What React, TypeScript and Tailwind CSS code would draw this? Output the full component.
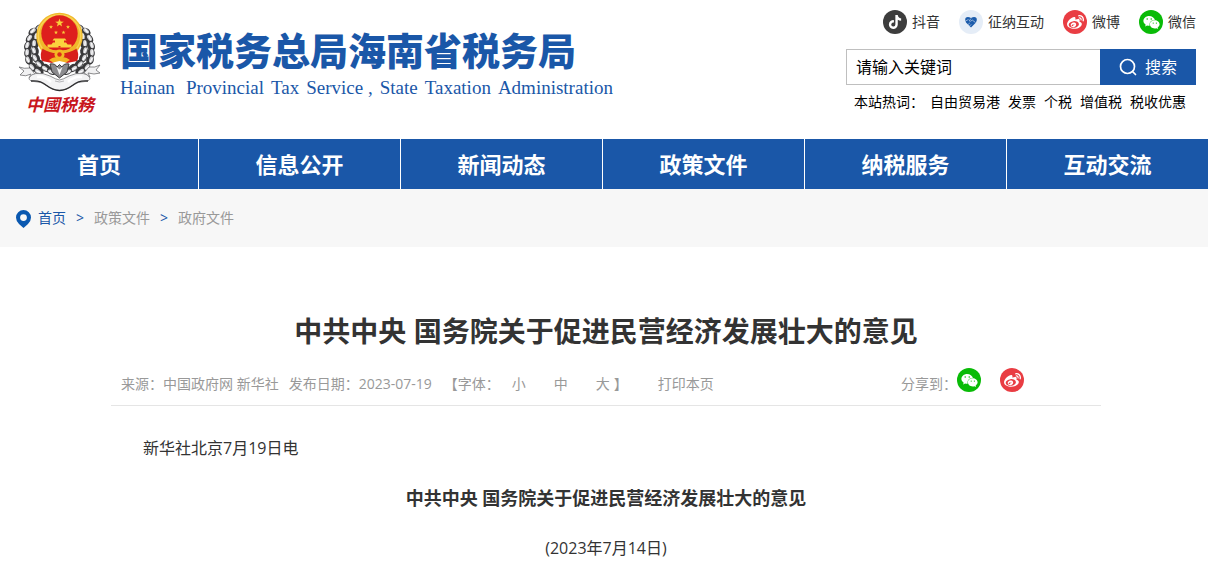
import { FaTiktok, FaWeibo, FaWeixin } from 'react-icons/fa6';

const socialLinks = [
  { label: '抖音', kind: 'douyin' },
  { label: '征纳互动', kind: 'heart' },
  { label: '微博', kind: 'weibo' },
  { label: '微信', kind: 'wechat' },
];

const hotWords = ['自由贸易港', '发票', '个税', '增值税', '税收优惠'];

const navItems = ['首页', '信息公开', '新闻动态', '政策文件', '纳税服务', '互动交流'];

const fontSizes = ['小', '中', '大'];

// Leaves of the wreath: x, y, rotation (left half, mirrored for the right)
const leaves = [
  [21, 17, 40],
  [15, 20, 50],
  [19, 25, 15],
  [12, 27, 35],
  [17, 32, 5],
  [10, 34, 20],
  [17, 39, -10],
  [10, 41, 5],
  [18, 46, -25],
  [11, 48, -15],
  [22, 52, -40],
  [15, 55, -35],
  [28, 56, -55],
  [21, 59, -55],
  [34, 59, -70],
];

function Wreath() {
  return (
    <g>
      {leaves.map(([x, y, r]) => (
        <g key={`${x}-${y}`} transform={`translate(${x} ${y}) rotate(${r})`}>
          <ellipse rx="3.8" ry="5" fill="#39393b" />
          <ellipse cx="-1" cy="-0.6" rx="1.9" ry="3.4" fill="#cfcfd2" />
          <path d="M-1.6 -2.600 L-0.6 1.800" stroke="#ffffff" strokeWidth="1.1" />
        </g>
      ))}
    </g>
  );
}

function Star({ x, y, s }: { x: number; y: number; s: number }) {
  return (
    <path
      transform={`translate(${x} ${y}) scale(${s})`}
      d="M0 -5 L1.2 -1.6 L4.8 -1.5 L1.9 0.6 L2.9 4 L0 2 L-2.9 4 L-1.9 0.6 L-4.8 -1.5 L-1.2 -1.6Z"
      fill="#f9cf3a"
    />
  );
}

function Emblem() {
  return (
    <svg viewBox="0 0 84 80" className="h-20 w-[84px]" aria-hidden="true">
      <Wreath />
      <g transform="translate(83 0) scale(-1 1)">
        <Wreath />
      </g>
      {/* Ribbon tails */}
      <path d="M1 55 Q6 57 12 56 L17 62 L11 66 L13 62 Q8 65 2 63 L6 59Z" fill="#f1f1f2" stroke="#707072" strokeWidth="0.8" />
      <path d="M82 53 Q77 56 71 55 L66 61 L72 65 L70 61 Q76 63 82 61 L78 58Z" fill="#f1f1f2" stroke="#707072" strokeWidth="0.8" />
      {/* National emblem */}
      <circle cx="41.500" cy="24" r="23.2" fill="#f0b92b" />
      <circle cx="41.500" cy="24" r="21.2" fill="none" stroke="#f8d353" strokeWidth="1.4" />
      <circle cx="41.500" cy="21.500" r="18.2" fill="#de1f1d" />
      <path d="M25 36 L33 40 H50 L58 36 Q62 42 59 49 L49 51 L41.500 47 L34 51 L24 49 Q21 42 25 36Z" fill="#d8201b" />
      <path d="M25 34 Q33 39 41.500 38 Q50 39 58 34 L58 37 Q50 42 41.500 41 Q33 42 25 37Z" fill="#f0b22a" />
      <circle cx="41.500" cy="42.500" r="5" fill="#f4b823" />
      <circle cx="41.500" cy="42.500" r="2.2" fill="#dc2a1c" />
      <path d="M31 48 Q37 43 41.500 47 Q46 43 52 48 L48 50.500 L41.500 49 L35 50.500Z" fill="#f2b526" />
      <path d="M36 26.500 H47 L48.500 28.500 H34.500Z M37 28.500 H46 V30.500 H37Z M35 30.500 H48 L50 33 H33Z M29.500 32.500 H53.500 V35.500 H29.500Z" fill="#fbd33e" />
      <path d="M40.500 34 H42.500 V35.500 H40.500Z" fill="#de1f1d" />
      <Star x={41.500} y={11} s={0.9} />
      <Star x={33} y={15} s={0.42} />
      <Star x={50} y={15} s={0.42} />
      <Star x={38} y={20.500} s={0.42} />
      <Star x={45.500} y={20.500} s={0.42} />
      {/* Centre knot and ribbon */}
      <path d="M32 52 Q37 51 39 55 L41.500 52.500 L44 55 Q46 51 51 52 L49 60 L41.500 66 L34 60Z" fill="#8b8b8e" stroke="#3e3e40" strokeWidth="1" />
      <path d="M38.500 55 L41.500 63 L44.500 55 L41.500 57.500Z" fill="#f4f4f5" />
      <path
        d="M11 66 Q13 62 18 61.500 Q25 60.500 32 64 Q38 67.500 41.500 68 Q45 67.500 51 64 Q58 60.500 65 61.500 Q70 62 72 66 Q72 69 67 69.500 Q60 69 54 74 Q48 78 41.500 78.500 Q35 78 29 74 Q23 69 16 69.500 Q11 69 11 66Z"
        fill="#f3f3f4"
        stroke="#77777a"
        strokeWidth="0.8"
      />
      <path d="M13 69 Q22 68 28 73 Q35 78.500 41.500 78.500 Q48 78.500 55 73 Q61 68 70 69" fill="none" stroke="#2f2f31" strokeWidth="1.3" />
      <path d="M19 65 Q27 64 33 70 M64 65 Q56 64 50 70" fill="none" stroke="#ffffff" strokeWidth="2.500" />
      <path d="M37 69 Q41.500 71 46 69" fill="none" stroke="#b5b5b8" strokeWidth="1" />
    </svg>
  );
}

function RoundIcon({ kind }: { kind: string }) {
  if (kind === 'douyin') {
    return (
      <span className="flex size-6 items-center justify-center rounded-full bg-[#3d3d3d] text-white">
        <FaTiktok size={14} />
      </span>
    );
  }
  if (kind === 'heart') {
    return (
      <span className="flex size-6 items-center justify-center rounded-full bg-[#e5edf7]">
        <svg viewBox="0 0 14 12" className="h-3 w-3.5" aria-hidden="true">
          <path d="M7 11.500 L2 6.500 Q0.500 4 1.500 2 Q3.600 0 7 2 Q10.400 0 12.500 2 Q13.500 4 12 6.500Z" fill="#1c5cab" />
          <path d="M1.500 5 L4.500 3.500 M7 2.500 L5.200 4.800 L6.800 5.200 L8.200 4 L11.500 6.500 M4 8.500 L5.800 7 M5.600 10 L7.200 8.400" fill="none" stroke="#e5edf7" strokeWidth="0.6" />
        </svg>
      </span>
    );
  }
  if (kind === 'weibo') {
    return (
      <span className="flex size-6 items-center justify-center rounded-full bg-[#e93d43] text-white">
        <FaWeibo size={17} />
      </span>
    );
  }
  return (
    <span className="flex size-6 items-center justify-center rounded-full bg-[#09bb07] text-white">
      <FaWeixin size={17} />
    </span>
  );
}

function Header() {
  return (
    <header className="flex justify-between pr-3 pl-[18px]">
      <a href="#" className="flex pt-3 text-[#1a57a8]">
        <div className="flex w-[84px] flex-col items-center">
          <Emblem />
          <span className="text-[17px] leading-[26px] font-bold whitespace-nowrap text-[#c8161d] italic">中國税務</span>
        </div>
        <div className="pt-3.5 pl-[18px]">
          <h1 className="text-[38px] leading-12 font-black whitespace-nowrap">国家税务总局海南省税务局</h1>
          <p className="mt-0.5 flex gap-[7px] font-['Liberation_Serif'] text-[19px] leading-6 whitespace-nowrap">
            <span className="mr-1">Hainan</span>
            <span>Provincial</span>
            <span>Tax</span>
            <span>Service ,</span>
            <span>State</span>
            <span>Taxation</span>
            <span>Administration</span>
          </p>
        </div>
      </a>

      <div className="flex w-[350px] flex-col pt-2.5">
        <ul className="flex justify-end gap-[19px] text-sm leading-6 text-[#333]">
          {socialLinks.map((item) => (
            <li key={item.label}>
              <a href="#" className="flex items-center gap-[5px]">
                <RoundIcon kind={item.kind} />
                {item.label}
              </a>
            </li>
          ))}
        </ul>

        <form className="mt-[15px] flex h-9" onSubmit={(e) => e.preventDefault()}>
          <input
            type="text"
            aria-label="请输入关键词"
            placeholder="请输入关键词"
            className="min-w-0 flex-1 border border-r-0 border-[#bfbfbf] px-[9px] text-base text-black outline-none placeholder:text-black"
          />
          <button type="submit" className="flex w-24 items-center justify-center gap-2 bg-[#1a57a8] text-base text-white">
            <svg viewBox="0 0 18 18" className="size-[18px]" fill="none" stroke="currentColor" strokeWidth="1.7" aria-hidden="true">
              <circle cx="8.500" cy="8.500" r="7" />
              <path d="M13.500 13.500 L16.500 16.500" strokeLinecap="round" />
            </svg>
            搜索
          </button>
        </form>

        <div className="mt-[5px] flex gap-2 pl-2 text-sm leading-6 text-black">
          <span className="-mr-0.5">本站热词：</span>
          {hotWords.map((word) => (
            <a key={word} href="#">
              {word}
            </a>
          ))}
        </div>
      </div>
    </header>
  );
}

function NavBar() {
  return (
    <nav className="mt-[21px] grid grid-cols-[199fr_202fr_202fr_202fr_202fr_201fr] bg-[#1a57a8]">
      {navItems.map((item) => (
        <a
          key={item}
          href="#"
          className="border-r border-white text-center text-[22px] leading-[50px] font-bold text-white last:border-r-0"
        >
          {item}
        </a>
      ))}
    </nav>
  );
}

function Breadcrumb() {
  return (
    <div className="flex h-[58px] items-center bg-[#f7f7f7] pl-4 text-sm text-[#999]">
      <svg viewBox="0 0 15 18" className="mt-0.5 mr-[7px] h-[18px] w-[15px]" aria-hidden="true">
        <path
          fillRule="evenodd"
          d="M7.500 0 A7.500 7.500 0 0 1 15 7.500 Q15 11 12 14 L7.500 18 L3 14 Q0 11 0 7.500 A7.500 7.500 0 0 1 7.500 0Z M7.500 4.200 A3.400 3.400 0 1 0 7.500 11 A3.400 3.400 0 1 0 7.500 4.200Z"
          fill="#0a58b0"
        />
      </svg>
      <a href="#" className="text-[#1a57a8]">首页</a>
      <span className="w-7 text-center text-[#1a57a8]">&gt;</span>
      <a href="#">政策文件</a>
      <span className="w-7 text-center text-[#1a57a8]">&gt;</span>
      <a href="#">政府文件</a>
    </div>
  );
}

function Article() {
  return (
    <article className="pt-[60px] pr-[107px] pl-[111px] text-[#333]">
      <h2 className="text-center text-[28px] leading-12 font-bold">中共中央 国务院关于促进民营经济发展壮大的意见</h2>

      <div className="mt-2 flex h-[43px] items-center border-b border-[#e5e5e5] px-2.5 text-sm text-[#999]">
        <span>来源：中国政府网 新华社</span>
        <span className="ml-2.5">发布日期：2023-07-19</span>
        <div className="ml-3 flex">
          <span>【字体：</span>
          <div className="flex gap-7 pl-3">
            {fontSizes.map((size) => (
              <button key={size} type="button">
                {size}
              </button>
            ))}
          </div>
          <span className="ml-1">】</span>
        </div>
        <button type="button" className="ml-[30px]">
          打印本页
        </button>
        <div className="mr-[67px] ml-auto flex items-center">
          <span>分享到：</span>
          <div className="mb-2 flex gap-[19px]">
            <a href="#" aria-label="微信">
              <RoundIcon kind="wechat" />
            </a>
            <a href="#" aria-label="微博">
              <RoundIcon kind="weibo" />
            </a>
          </div>
        </div>
      </div>

      <div className="pt-[26px] text-base leading-8">
        <p className="indent-8">新华社北京7月19日电</p>
        <p className="mt-[18px] text-center text-lg leading-8 font-bold">中共中央 国务院关于促进民营经济发展壮大的意见</p>
        <p className="mt-[18px] text-center">(2023年7月14日)</p>
      </div>
    </article>
  );
}

export default function App() {
  return (
    <div className="bg-white font-['Open_Sans','Noto_Sans_CJK_SC',sans-serif]">
      <Header />
      <NavBar />
      <Breadcrumb />
      <Article />
    </div>
  );
}
